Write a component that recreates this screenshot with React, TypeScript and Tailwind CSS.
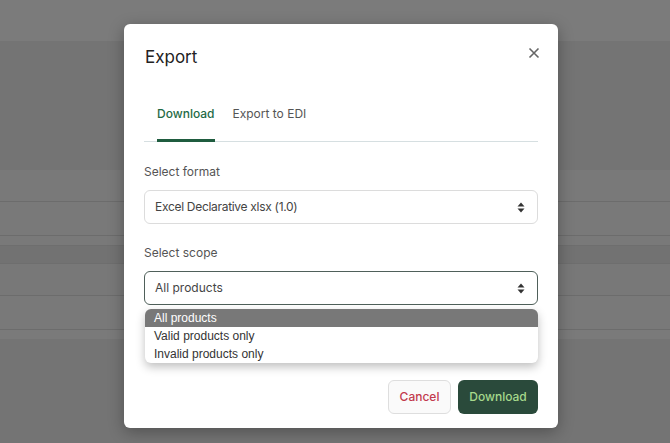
import React from 'react';

function SortArrows() {
  return (
    <svg width="8" height="11" viewBox="0 0 8 11" className="shrink-0">
      <path d="M4 0.5 L7.5 4.5 H0.5 Z" fill="#333" />
      <path d="M4 10.5 L7.5 6.5 H0.5 Z" fill="#333" />
    </svg>
  );
}

const bands: { h: number; bg: string }[] = [
  { h: 41, bg: 'bg-[#7b7b7b]' },
  { h: 129, bg: 'bg-[#747474]' },
  { h: 31, bg: 'bg-[#797979]' },
  { h: 1, bg: 'bg-[#6c6c6c]' },
  { h: 33, bg: 'bg-[#797979]' },
  { h: 1, bg: 'bg-[#6c6c6c]' },
  { h: 9, bg: 'bg-[#797979]' },
  { h: 1, bg: 'bg-[#6e6e6e]' },
  { h: 17, bg: 'bg-[#727272]' },
  { h: 1, bg: 'bg-[#6e6e6e]' },
  { h: 31, bg: 'bg-[#787878]' },
  { h: 1, bg: 'bg-[#6c6c6c]' },
  { h: 33, bg: 'bg-[#797979]' },
  { h: 1, bg: 'bg-[#6c6c6c]' },
  { h: 9, bg: 'bg-[#7a7a7a]' },
  { h: 104, bg: 'bg-[#747474]' },
];

export default function App() {
  return (
    <div className="relative w-[670px] h-[443px] overflow-hidden font-['Inter',sans-serif]">
      {/* dimmed page behind the dialog */}
      <div className="flex flex-col w-full">
        {bands.map((b, i) => (
          <div key={i} className={`w-full ${b.bg}`} style={{ height: b.h }} />
        ))}
      </div>

      {/* dialog */}
      <div className="absolute left-[124px] top-[24px] w-[434px] h-[404px] bg-white rounded-[6px] shadow-[0_4px_16px_rgba(0,0,0,0.3)] px-5 pt-5 flex flex-col">
        <div className="flex items-center justify-between h-6 mt-px">
          <h2 className="text-[17px] text-[#222] leading-6 pl-px">Export</h2>
          <button className="-mt-2 mr-[-2px]">
            <svg width="12" height="12" viewBox="0 0 12 12">
              <path d="M1.5 1.5 L10.5 10.5 M10.5 1.5 L1.5 10.5" stroke="#666" strokeWidth="1.6" />
            </svg>
          </button>
        </div>

        <div className="mt-[23px] flex border-b border-[#d6dfe1] text-[12px]">
          <div className="ml-[13px] pt-[12px] pb-[15px] border-b-[3px] border-[#1f5c3f] -mb-px text-[#1f6a45] font-medium leading-5">
            Download
          </div>
          <div className="ml-[18px] pt-[12px] pb-[15px] text-[#555] leading-5">Export to EDI</div>
        </div>

        <label className="mt-5 text-[12px] leading-5 text-[#555]">Select format</label>
        <div className="mt-2 h-[34px] border border-[#dcdcdc] rounded-[6px] flex items-center justify-between pl-[10px] pr-[12px] text-[12px] tracking-[-0.3px] text-[#444]">
          <span>Excel Declarative xlsx (1.0)</span>
          <SortArrows />
        </div>

        <label className="mt-[19px] text-[12px] leading-5 text-[#555]">Select scope</label>
        <div className="relative mt-2">
          <div className="h-[34px] border border-[#4f605a] rounded-[6px] flex items-center justify-between pl-[10px] pr-[12px] text-[12px] text-[#444]">
            <span>All products</span>
            <SortArrows />
          </div>
          {/* open native list */}
          <div className="absolute left-px right-0 top-[38px] z-10 bg-white rounded-[6px] overflow-hidden shadow-[0_4px_10px_rgba(0,0,0,0.25)] font-['Liberation_Sans',sans-serif] text-[12px]">
            <div className="h-[18px] leading-[18px] px-[9px] bg-[#787878] text-white">All products</div>
            <div className="h-[18px] leading-[18px] px-[9px] text-[#333]">Valid products only</div>
            <div className="h-[18px] leading-[18px] px-[9px] text-[#333]">Invalid products only</div>
          </div>
        </div>

        <div className="mt-[75px] flex justify-end gap-[7px] text-[12px] font-medium">
          <button className="h-[34px] w-[63px] rounded-[6px] border border-[#dedede] bg-[#fafafa] text-[#c23a4e]">
            Cancel
          </button>
          <button className="h-[34px] w-[80px] rounded-[6px] bg-[#2a4a3b] text-[#a6d98c]">
            Download
          </button>
        </div>
      </div>
    </div>
  );
}
